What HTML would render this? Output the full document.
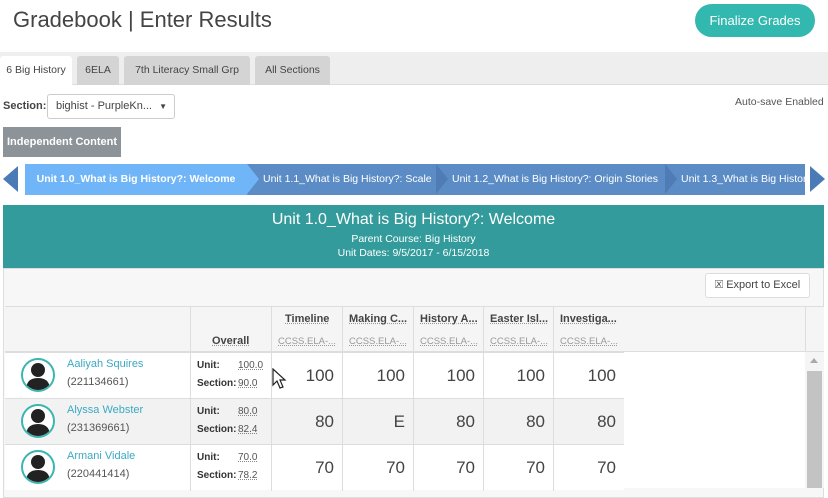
<!DOCTYPE html>
<html><head><style>
*{box-sizing:border-box;margin:0;padding:0}
body{width:828px;height:488px;overflow:hidden;background:#fff;font-family:"Liberation Sans",sans-serif;color:#444;position:relative}
.a{position:absolute}
.tab{position:absolute;top:56px;height:29px;background:#d4d4d4;font-size:10.5px;line-height:29px;text-align:center;color:#444;border-radius:3px 3px 0 0}
.seg{position:absolute;top:164px;height:31px;line-height:31px;color:#fff;font-size:10.5px;white-space:nowrap;overflow:hidden}
.hc{position:absolute;top:306px;height:46px;border-left:1px solid #ddd;font-size:11px;font-weight:bold;color:#444}
.hc .t{position:absolute;left:13px;top:7px;text-decoration:underline dotted #999}
.hc .s{position:absolute;left:6px;top:30px;font-weight:normal;color:#999;font-size:9.5px;text-decoration:underline dotted #999}
.row{position:absolute;left:5px;width:619px;height:46px;border-top:1px solid #ddd}
.cell{position:absolute;top:0;height:46px;border-left:1px solid #ddd;font-size:17px;line-height:46px;text-align:right;padding-right:8px;color:#444}
.av{position:absolute;left:16px;top:5px;width:34px;height:34px;border:2px solid #3bb5b0;border-radius:50%;background:#fff;overflow:hidden}
.nm{position:absolute;left:62px;top:5px;font-size:11px;color:#3ba9c4}
.id{position:absolute;left:62px;top:23px;font-size:11px;color:#555}
.ovc{position:absolute;left:185px;top:0;width:81px;height:46px;border-left:1px solid #ddd;font-size:10px;line-height:18px;padding:4px 0 0 6px;color:#333}
.ovc b{display:inline-block;width:41px}
.ovc u{color:#555;text-decoration:underline dotted #888}
</style></head><body>
<div class="a" style="left:13px;top:7px;font-size:22px;color:#444">Gradebook | Enter Results</div>
<div class="a" style="left:695px;top:4px;width:120px;height:33px;border-radius:17px;background:#33b8b0;color:#fff;font-size:13px;line-height:33px;text-align:center">Finalize Grades</div>
<div class="a" style="left:0;top:52px;width:828px;height:33px;background:#eee;border-bottom:1px solid #ddd"></div>
<div class="tab" style="left:0;width:72px;background:#fff;height:30px">6 Big History</div>
<div class="tab" style="left:77px;width:42px">6ELA</div>
<div class="tab" style="left:124px;width:126px">7th Literacy Small Grp</div>
<div class="tab" style="left:255px;width:75px">All Sections</div>
<div class="a" style="left:3px;top:100px;font-size:11px;font-weight:bold">Section:</div>
<div class="a" style="left:47px;top:94px;width:128px;height:25px;border:1px solid #ccc;border-radius:3px;font-size:11px;line-height:23px;padding-left:8px">bighist - PurpleKn... <span style="font-size:8px;margin-left:4px">▼</span></div>
<div class="a" style="left:735px;top:96px;font-size:10.5px;color:#555">Auto-save Enabled</div>
<div class="a" style="left:3px;top:127px;width:118px;height:30px;background:#8c949a;color:#fff;font-size:11px;font-weight:bold;line-height:30px;text-align:center">Independent Content</div>
<div class="a" style="left:3px;top:166px;width:0;height:0;border-top:13px solid transparent;border-bottom:13px solid transparent;border-right:15px solid #4a7bb7"></div>
<div class="seg" style="left:25px;width:804px;background:#5b8cc6"></div>
<div class="seg" style="left:25px;width:222px;background:#70b5f7;font-weight:bold;text-align:center">Unit 1.0_What is Big History?: Welcome</div>
<div class="a" style="left:247px;top:164px;border-top:15.5px solid transparent;border-bottom:15.5px solid transparent;border-left:12px solid #70b5f7"></div>
<div class="seg" style="left:263px;width:170px">Unit 1.1_What is Big History?: Scale</div>
<div class="a" style="left:436px;top:164px;border-top:15.5px solid transparent;border-bottom:15.5px solid transparent;border-left:12px solid #4f7cb4"></div>
<div class="seg" style="left:452px;width:212px">Unit 1.2_What is Big History?: Origin Stories</div>
<div class="a" style="left:665px;top:164px;border-top:15.5px solid transparent;border-bottom:15.5px solid transparent;border-left:12px solid #4f7cb4"></div>
<div class="seg" style="left:681px;width:124px">Unit 1.3_What is Big History?</div>
<div class="a" style="left:805px;top:164px;width:24px;height:31px;background:#fff"></div>
<div class="a" style="left:810px;top:166px;border-top:13px solid transparent;border-bottom:13px solid transparent;border-left:15px solid #4a7bb7"></div>
<div class="a" style="left:3px;top:205px;width:821px;height:63px;background:#339b9c;color:#fff;text-align:center">
<div style="font-size:16px;margin-top:6px">Unit 1.0_What is Big History?: Welcome</div>
<div style="font-size:10.5px;margin-top:4px">Parent Course: Big History</div>
<div style="font-size:10.5px;margin-top:2px">Unit Dates: 9/5/2017 - 6/15/2018</div></div>
<div class="a" style="left:3px;top:268px;width:821px;height:230px;background:#f7f7f7;border:1px solid #ddd"></div>
<div class="a" style="left:705px;top:273px;width:105px;height:25px;background:#fff;border:1px solid #ddd;border-radius:3px;font-size:11px;line-height:23px;text-align:center">🗵 Export to Excel</div>
<div class="a" style="left:5px;top:306px;width:819px;height:46px;background:#f5f5f5;border-top:1px solid #ddd;border-bottom:1px solid #ddd"></div>
<div class="hc" style="left:190px;width:81px"><span class="t" style="left:21px;top:29px">Overall</span></div>
<div class="hc" style="left:271px;width:71px"><span class="t">Timeline</span><span class="s">CCSS.ELA-...</span></div>
<div class="hc" style="left:342px;width:71px"><span class="t" style="left:6px">Making C...</span><span class="s">CCSS.ELA-...</span></div>
<div class="hc" style="left:413px;width:70px"><span class="t" style="left:6px">History A...</span><span class="s">CCSS.ELA-...</span></div>
<div class="hc" style="left:483px;width:70px"><span class="t" style="left:6px">Easter Isl...</span><span class="s">CCSS.ELA-...</span></div>
<div class="hc" style="left:553px;width:252px"><span class="t" style="left:6px">Investiga...</span><span class="s">CCSS.ELA-...</span></div>
<div class="hc" style="left:805px;width:19px"></div>
<div class="a" style="left:5px;top:352px;width:800px;height:136px;background:#fff"></div>
<div class="a" style="left:805px;top:352px;width:19px;height:136px;background:#f5f5f5"></div>
<div class="a" style="left:810px;top:358px;border-left:4px solid transparent;border-right:4px solid transparent;border-bottom:5px solid #aaa"></div>
<div class="a" style="left:807px;top:371px;width:15px;height:117px;background:#c3c3c3"></div>

<div class="row" style="top:352px;background:#fff">
<div class="av"><svg width="30" height="30" viewBox="0 0 30 30"><circle cx="15" cy="10" r="7" fill="#222"/><path d="M3 30 Q3 18 15 18 Q27 18 27 30Z" fill="#222"/></svg></div>
<div class="nm">Aaliyah Squires</div><div class="id">(221134661)</div>
<div class="ovc"><b>Unit:</b><u>100.0</u><br><b>Section:</b><u>90.0</u></div>
<div class="cell" style="left:266px;width:71px">100</div><div class="cell" style="left:337px;width:71px">100</div><div class="cell" style="left:408px;width:70px">100</div><div class="cell" style="left:478px;width:70px">100</div><div class="cell" style="left:548px;width:71px">100</div>
</div>
<div class="row" style="top:398px;background:#f2f2f2">
<div class="av"><svg width="30" height="30" viewBox="0 0 30 30"><circle cx="15" cy="10" r="7" fill="#222"/><path d="M3 30 Q3 18 15 18 Q27 18 27 30Z" fill="#222"/></svg></div>
<div class="nm">Alyssa Webster</div><div class="id">(231369661)</div>
<div class="ovc"><b>Unit:</b><u>80.0</u><br><b>Section:</b><u>82.4</u></div>
<div class="cell" style="left:266px;width:71px">80</div><div class="cell" style="left:337px;width:71px">E</div><div class="cell" style="left:408px;width:70px">80</div><div class="cell" style="left:478px;width:70px">80</div><div class="cell" style="left:548px;width:71px">80</div>
</div>
<div class="row" style="top:444px;background:#fff">
<div class="av"><svg width="30" height="30" viewBox="0 0 30 30"><circle cx="15" cy="10" r="7" fill="#222"/><path d="M3 30 Q3 18 15 18 Q27 18 27 30Z" fill="#222"/></svg></div>
<div class="nm">Armani Vidale</div><div class="id">(220441414)</div>
<div class="ovc"><b>Unit:</b><u>70.0</u><br><b>Section:</b><u>78.2</u></div>
<div class="cell" style="left:266px;width:71px">70</div><div class="cell" style="left:337px;width:71px">70</div><div class="cell" style="left:408px;width:70px">70</div><div class="cell" style="left:478px;width:70px">70</div><div class="cell" style="left:548px;width:71px">70</div>
</div>
<svg class="a" style="left:272px;top:368px" width="16" height="22" viewBox="0 0 16 22"><path d="M1 1 L1 17 L5 13 L8 20 L11 19 L8 12 L13 12 Z" fill="#fff" stroke="#222" stroke-width="1.2"/></svg>
</body></html>
